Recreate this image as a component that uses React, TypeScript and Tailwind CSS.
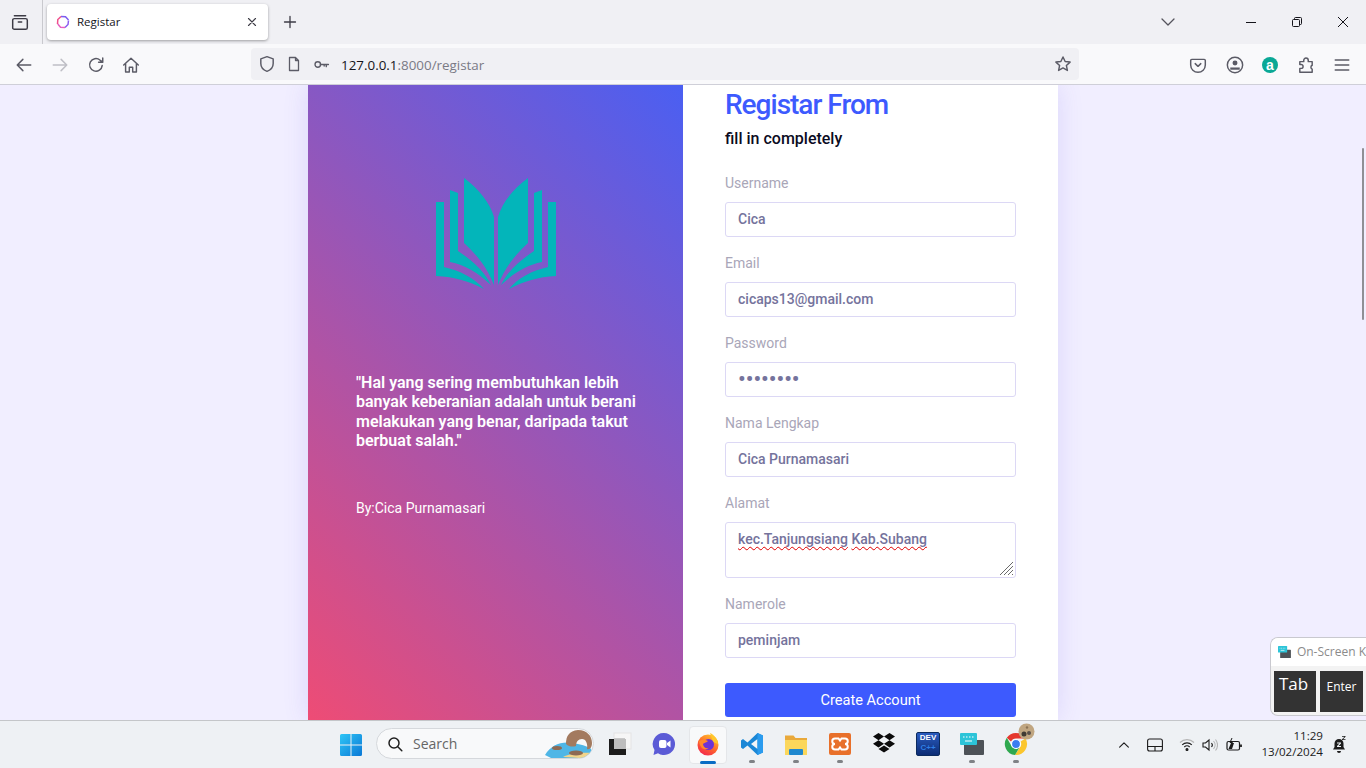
import type { ReactNode } from 'react';

const CHROME_FONT = 'font-["Open_Sans","Noto_Sans",sans-serif]';

const FIELDS_TOP = [
  { label: 'Username', value: 'Cica', type: 'text' },
  { label: 'Email', value: 'cicaps13@gmail.com', type: 'text' },
  { label: 'Password', value: 'password', type: 'password' },
  { label: 'Nama Lengkap', value: 'Cica Purnamasari', type: 'text' },
];

function Stroke({ size = 18, children }: { size?: number; children: ReactNode }) {
  return (
    <svg
      width={size}
      height={size}
      viewBox="0 0 16 16"
      fill="none"
      stroke="currentColor"
      strokeWidth="1.3"
      strokeLinecap="round"
      strokeLinejoin="round"
    >
      {children}
    </svg>
  );
}

function TabStrip() {
  return (
    <div className="flex h-[44px] shrink-0 items-center bg-[#f0f0f4] text-[#3c3b45]">
      <div className="flex h-full w-[43px] items-center justify-center border-r border-[#c9c9ce] pr-[2px]">
        <Stroke>
          <rect x="1.5" y="5" width="13" height="9.5" rx="1.5" />
          <path d="M3 2.5h10M6.5 8h3" />
        </Stroke>
      </div>
      <div className="ml-[4px] flex h-[36px] w-[221px] items-center rounded-[4px] bg-white pl-[9px] pr-[9px] shadow-[0_1px_3px_rgba(0,0,0,0.35)]">
        <svg width="14" height="14" viewBox="0 0 14 14" fill="none" strokeWidth="1.5">
          <path d="M5 1.500 9.500 1.800 12.500 5" stroke="#7c5cf0" />
          <path d="M12.500 5.500 12 9.500 9 12.500" stroke="#8a5cf0" />
          <path d="M9 12.500 4.500 12.300 1.800 9" stroke="#e65fc0" />
          <path d="M1.500 9 1.800 4.500 5 1.500" stroke="#f0508c" />
        </svg>
        <span className={`ml-[7px] flex-1 text-[11.5px] text-[#15141a] ${CHROME_FONT}`}>Registar</span>
        <Stroke size={14}>
          <path d="m4 4 8 8M12 4l-8 8" />
        </Stroke>
      </div>
      <div className="ml-[14px]">
        <Stroke size={16}>
          <path d="M8 2.5v11M2.5 8h11" />
        </Stroke>
      </div>
      <div className="ml-auto flex items-center text-[#55545c]">
        <Stroke size={16}>
          <path d="m2 5 6 6 6-6" />
        </Stroke>
      </div>
      <div className="flex items-center text-[#15141a]">
        <div className="ml-[70px] h-[1px] w-[10px] bg-[#15141a]" />
        <svg className="ml-[36px]" width="10" height="10" viewBox="0 0 10 10" fill="none" stroke="#15141a">
          <rect x="0.5" y="2.5" width="7" height="7" rx="1" />
          <path d="M2.5 2.5v-1a1 1 0 0 1 1-1h5a1 1 0 0 1 1 1v5a1 1 0 0 1-1 1h-1" />
        </svg>
        <svg className="ml-[36px] mr-[18px]" width="10" height="10" viewBox="0 0 10 10" fill="none" stroke="#15141a">
          <path d="m0 0 10 10M10 0 0 10" />
        </svg>
      </div>
    </div>
  );
}

function NavBar() {
  return (
    <div className="flex h-[41px] shrink-0 items-center border-b border-[#cfcfd8] bg-[#f9f9fb] text-[#5b5b66]">
      <div className="flex w-[251px] items-center pl-[15px] pt-[1px]">
        <Stroke>
          <path d="M14 8H2.5M7 3 2 8l5 5" />
        </Stroke>
        <div className="ml-[18px] text-[#bfbfc6]">
          <Stroke>
            <path d="M2 8h11.5M9 3l5 5-5 5" />
          </Stroke>
        </div>
        <div className="ml-[18px]">
          <Stroke>
            <path d="M13.5 8.5A5.6 5.6 0 1 1 11.5 3.6L14 5.5M14 1.8v3.7h-3.7" />
          </Stroke>
        </div>
        <div className="ml-[17px]">
          <Stroke>
            <path d="M1.5 8 8 2l6.5 6M3.2 6.8v7.4h3.3V10h3v4.2h3.3V6.8" />
          </Stroke>
        </div>
      </div>
      <div className="flex h-[32px] w-[828px] items-center rounded-[4px] bg-[#f0f0f4] pl-[7px] pr-[7px]">
        <Stroke>
          <path d="M8 1.5 2.5 3.5v4c0 3.4 2.3 5.8 5.5 7 3.2-1.2 5.5-3.6 5.5-7v-4z" />
        </Stroke>
        <div className="ml-[10px]">
          <Stroke size={16}>
            <path d="M3.5 1.5h6l3 3v10h-9zM9.5 1.5v3h3" />
          </Stroke>
        </div>
        <div className="ml-[11px]">
          <Stroke size={17}>
            <circle cx="4.5" cy="8" r="2.6" />
            <path d="M7 8h7.5M12.5 8v2M10.5 8v1.5" />
          </Stroke>
        </div>
        <div className={`ml-[11px] flex-1 pt-[2px] text-[13.4px] ${CHROME_FONT}`}>
          <span className="text-[#15141a]">127.0.0.1</span>
          <span className="text-[#7a7a85]">:8000/registar</span>
        </div>
        <Stroke>
          <path d="m8 1.8 1.9 4 4.4.5-3.3 3 .9 4.4L8 11.5l-3.9 2.2.9-4.4-3.3-3 4.4-.5z" />
        </Stroke>
      </div>
      <div className="flex flex-1 items-center pl-[110px] pt-[1px]">
        <Stroke>
          <path d="M2.5 3h11a1 1 0 0 1 1 1v4a6.500 6.500 0 0 1-13 0V4a1 1 0 0 1 1-1z" />
          <path d="m5.500 6.800 2.500 2.400 2.500-2.400" />
        </Stroke>
        <div className="ml-[19px]">
          <svg width="18" height="18" viewBox="0 0 16 16" fill="none" stroke="currentColor" strokeWidth="1.3">
            <circle cx="8" cy="8" r="6.800" />
            <circle cx="8" cy="6.200" r="2.200" fill="currentColor" stroke="none" />
            <path d="M3.800 11.200h8.400" strokeWidth="2" />
          </svg>
        </div>
        <div className="ml-[18px] flex h-[16px] w-[16px] items-center justify-center rounded-full bg-[#0aa896] font-['Liberation_Sans',sans-serif] text-[14px] font-bold leading-none text-white">
          a
        </div>
        <div className="ml-[19px]">
          <Stroke>
            <path d="M6 3.800a2 2 0 0 1 4 0V5h3.500v3.200a2 2 0 0 0 0 3.600v2.700H2.500V11h1.200a1.700 1.700 0 0 0 0-3.400H2.500V5H6z" />
          </Stroke>
        </div>
        <div className="ml-[18px]">
          <Stroke>
            <path d="M2 3.500h12M2 8h12M2 12.500h12" />
          </Stroke>
        </div>
      </div>
    </div>
  );
}

function BookLogo() {
  return (
    <svg width="150" height="135" viewBox="0 0 150 135" fill="#03b5ba">
      <path d="M43 13C58 24 69 38 73 52L73 120C66 102 55 89 43 78Z" />
      <path d="M107 13C92 24 81 38 77 52L77 120C84 102 95 89 107 78Z" />
      <path d="M29 25 37 28V86C52 96 64 107 70 120 56 107 44 100 29 97Z" />
      <path d="M121 25 113 28V86C98 96 86 107 80 120 94 107 106 100 121 97Z" />
      <path d="M15 37H23V102C40 106 53 113 63 124 48 116 34 112 15 111Z" />
      <path d="M135 37H127V102C110 106 97 113 88 124 103 116 117 112 135 111Z" />
    </svg>
  );
}

function QuotePanel() {
  return (
    <div className="flex w-[375px] flex-col bg-[linear-gradient(45deg,#ee4c75,#4a5ff2)] pl-[48px] pr-[40px] text-white">
      <div className="ml-[-8px] mt-[80px] flex justify-center">
        <BookLogo />
      </div>
      <p className="mt-[73px] text-[16px] font-semibold leading-[19.4px]">
        "Hal yang sering membutuhkan lebih banyak keberanian adalah untuk berani melakukan yang benar, daripada takut
        berbuat salah."
      </p>
      <p className="mt-[47px] text-[14px] leading-[20px]">By:Cica Purnamasari</p>
    </div>
  );
}

function Field({ label, value, type }: { label: string; value: string; type: string }) {
  return (
    <div className="mb-[16px]">
      <label className="mb-[8px] block text-[14px] leading-[21px] text-[#a9a6b8]">{label}</label>
      <input
        readOnly
        type={type}
        value={value}
        className={`block h-[35px] w-full rounded-[3px] border border-[#dcd8f5] bg-white px-[12px] pb-[1px] font-medium text-[#75739c] outline-none ${
          type === 'password' ? 'text-[22px]' : 'text-[14px]'
        }`}
      />
    </div>
  );
}

function FormPanel() {
  return (
    <div className="w-[375px] bg-white pl-[42px] pr-[42px] pt-[2px]">
      <h1 className="text-[28px] font-medium leading-[36px] tracking-[-1px] text-[#3d5afe]">Registar From</h1>
      <p className="mt-[4px] text-[16px] font-medium leading-[24px] text-[#0b0b22]">fill in completely</p>
      <div className="mt-[22px]">
        {FIELDS_TOP.map((field) => (
          <Field key={field.label} {...field} />
        ))}
        <div className="mb-[16px]">
          <label className="mb-[8px] block text-[14px] leading-[21px] text-[#a9a6b8]">Alamat</label>
          <div className="relative h-[56px] rounded-[3px] border border-[#dcd8f5] px-[12px] pt-[6px] text-[14px] font-medium leading-[21px] text-[#75739c]">
            <span className="underline decoration-[#e00000] decoration-wavy decoration-1 underline-offset-2 [text-decoration-skip-ink:none]">kec.Tanjungsiang</span>{' '}
            <span className="underline decoration-[#e00000] decoration-wavy decoration-1 underline-offset-2 [text-decoration-skip-ink:none]">Kab.Subang</span>
            <svg className="absolute bottom-[1px] right-[1px]" width="15" height="15" viewBox="0 0 15 15" stroke="#6b6b6b" strokeWidth="1">
              <path d="M1 14 14 1M5 14 14 5M9 14l5-5M13 14l1-1" />
            </svg>
          </div>
        </div>
        <Field label="Namerole" value="peminjam" type="text" />
        <button
          type="button"
          className="mt-[9px] h-[34px] w-full rounded-[3px] bg-[#3d5afe] pt-[1px] text-[14.6px] text-white"
        >
          Create Account
        </button>
      </div>
    </div>
  );
}

function WindowsLogo() {
  return (
    <svg width="24" height="24" viewBox="0 0 24 24">
      <defs>
        <linearGradient id="win" x1="0" y1="0" x2="1" y2="1">
          <stop offset="0" stopColor="#2fc6f6" />
          <stop offset="1" stopColor="#0a78d6" />
        </linearGradient>
      </defs>
      <path fill="url(#win)" d="M1 2.500A1.500 1.500 0 0 1 2.500 1h9v10.500H1zM12.500 1h9A1.500 1.500 0 0 1 23 2.500v9H12.500zM1 12.500h10.500V23h-9A1.500 1.500 0 0 1 1 21.500zM12.500 12.500H23v9a1.500 1.500 0 0 1-1.500 1.500h-9z" />
    </svg>
  );
}

function SearchPill() {
  return (
    <div className="ml-[13px] mb-[2px] flex h-[31px] w-[218px] items-center overflow-hidden rounded-full border border-[#d5d8dc] bg-[#f8f9fa] pl-[10px]">
      <svg width="16" height="16" viewBox="0 0 16 16" fill="none" stroke="#202020" strokeWidth="1.500">
        <circle cx="7" cy="7" r="5" />
        <path d="m10.800 10.800 4 4" strokeLinecap="round" />
      </svg>
      <span className={`ml-[10px] flex-1 text-[14px] text-[#666] ${CHROME_FONT}`}>Search</span>
      <svg width="50" height="29" viewBox="0 0 50 29">
        <path d="M2 26C8 16 18 12 30 14c10 2 18 4 19 8-2 5-6 7-12 7H8z" fill="#4fb6e6" />
        <path d="M20 28c6-4 20-5 29-4-2 4-7 5-12 5z" fill="#f2d48a" />
        <path d="M23 15c0-8 3-13 12-14 9 0 14 6 14 13 0 4-2 7-5 6 1-5-1-10-5-10-4 0-6 3-6 7-3 1-7 1-10-2z" fill="#a37a5f" />
        <ellipse cx="14" cy="19" rx="5" ry="2" fill="#8d6a54" />
        <ellipse cx="33" cy="24" rx="7" ry="2.500" fill="#8d6a54" />
      </svg>
    </div>
  );
}

function FirefoxIcon() {
  return (
    <svg width="24" height="24" viewBox="0 0 24 24">
      <defs>
        <linearGradient id="fx" x1="0.8" y1="0" x2="0.2" y2="1">
          <stop offset="0" stopColor="#ffcb2d" />
          <stop offset="0.5" stopColor="#ff6a2b" />
          <stop offset="1" stopColor="#f2224f" />
        </linearGradient>
      </defs>
      <circle cx="12" cy="13" r="10.500" fill="url(#fx)" />
      <path d="M14 1c4 2 8 6 8 11l-5-2z" fill="#ffc62b" />
      <circle cx="12.500" cy="12.500" r="5.500" fill="#6b33d6" />
      <path d="M3 9c3-2 6-2 9 0-2 2-5 2-5 3 0 3 3 5 6 4-4 3-9 1-10-7z" fill="#ff8a2b" />
    </svg>
  );
}

function TaskIcons() {
  return (
    <>
      <TaskSlot>
        <svg width="24" height="24" viewBox="0 0 24 24">
          <rect x="6" y="1" width="17" height="16" fill="#f6f6f6" stroke="#e4e4e4" />
          <rect x="6" y="6" width="11" height="11" fill="#c9c9c9" />
          <rect x="1" y="7" width="17" height="16" fill="#1c1c1c" />
          <rect x="6" y="7" width="12" height="10" fill="#bdbdbd" />
        </svg>
      </TaskSlot>
      <TaskSlot>
        <svg width="24" height="24" viewBox="0 0 24 24">
          <path d="M12 1a11 11 0 1 1-6 20.200L1.500 23l1-5A11 11 0 0 1 12 1z" fill="#5b5bd6" />
          <rect x="7" y="8" width="7.500" height="8" rx="2" fill="#fff" />
          <path d="m15 11 3.500-2.500v7L15 13z" fill="#fff" />
        </svg>
      </TaskSlot>
      <TaskSlot active>
        <FirefoxIcon />
      </TaskSlot>
      <TaskSlot running>
        <svg width="24" height="24" viewBox="0 0 24 24">
          <path d="M17.500 1 23 3.500v17L17.500 23 7.500 13.500 3 17l-2-1.500v-7L3 7l4.500 3.500z" fill="#1b87d6" />
          <path d="M17.500 7 11 12l6.500 5z" fill="#f3f5f7" />
          <path d="M17.500 1 23 3.500v17L17.500 23z" fill="#2a9bee" />
        </svg>
      </TaskSlot>
      <TaskSlot running>
        <svg width="24" height="24" viewBox="0 0 24 24">
          <path d="M1 3.500h8.500l2 2.500H23v16H1z" fill="#e9a93a" />
          <rect x="1" y="8" width="22" height="15" fill="#fbd75b" />
          <rect x="5" y="17" width="14" height="6" rx="1" fill="#1f88cf" />
        </svg>
      </TaskSlot>
      <TaskSlot running>
        <svg width="24" height="24" viewBox="0 0 24 24" fill="none">
          <rect x="1" y="1" width="22" height="22" rx="2" fill="#e8702a" />
          <path d="M7 6.500h3.500l1.500 2 1.500-2H17a2.500 2.500 0 0 1 0 5.500 2.500 2.500 0 0 1 0 5.500h-3.500l-1.500-2-1.500 2H7a2.500 2.500 0 0 1 0-5.500 2.500 2.500 0 0 1 0-5.500z" stroke="#fff" strokeWidth="2" />
        </svg>
      </TaskSlot>
      <TaskSlot>
        <svg width="24" height="24" viewBox="0 0 24 24" fill="#0b0b0b">
          <path d="M6.500 1 12 4.600 6.500 8.200 1 4.600zM17.500 1 23 4.600l-5.500 3.600L12 4.600zM1 11.800l5.500-3.600 5.500 3.600-5.500 3.600zM17.500 8.200l5.500 3.600-5.500 3.600-5.500-3.600zM6.500 17 12 13.500l5.500 3.500-5.500 3.600z" />
        </svg>
      </TaskSlot>
      <TaskSlot>
        <div className="flex h-[24px] w-[24px] flex-col items-center rounded-[2px] border border-[#0b2a5e] bg-[linear-gradient(#2a5cc0,#0c2c74)] font-['Liberation_Sans',sans-serif] text-[8px] font-bold leading-[10px]">
          <span className="text-white">DEV</span>
          <span className="text-[#2f7fe6]">C++</span>
        </div>
      </TaskSlot>
      <TaskSlot running>
        <KeyboardGlyph size={24} />
      </TaskSlot>
      <TaskSlot running>
        <div className="relative">
          <svg width="24" height="24" viewBox="0 0 24 24">
            <path d="M12 1a11 11 0 0 1 9.500 5.500H12a5.500 5.500 0 0 0-5 3L2.800 5.800A11 11 0 0 1 12 1z" fill="#e5382d" />
            <path d="M21.500 6.500A11 11 0 0 1 11 23l4.800-7.500a5.500 5.500 0 0 0 .8-6z" fill="#fbc62d" />
            <path d="M11 23A11 11 0 0 1 2.800 5.800L7.500 14a5.500 5.500 0 0 0 8 1.500z" fill="#2fa84f" />
            <circle cx="12" cy="12" r="4.500" fill="#3b7df0" stroke="#fff" strokeWidth="1.200" />
          </svg>
          <svg className="absolute right-[-7px] top-[-9px]" width="17" height="17" viewBox="0 0 17 17">
            <circle cx="8.500" cy="8.500" r="8" fill="#c0a681" />
            <circle cx="6" cy="11" r="2.500" fill="#3f3a34" />
            <circle cx="11" cy="10" r="2" fill="#57504a" />
            <circle cx="9" cy="4.500" r="1.200" fill="#8a7254" />
          </svg>
        </div>
      </TaskSlot>
    </>
  );
}

function TaskSlot({ children, active, running }: { children: ReactNode; active?: boolean; running?: boolean }) {
  return (
    <div className="relative flex h-[44px] w-[44px] items-center justify-center">
      {active && <span className="absolute inset-x-[3px] inset-y-[3px] rounded-[4px] border border-[#e4e6e9] bg-[#f8f9fa]" />}
      <span className="relative mb-[2px]">{children}</span>
      {running && <span className="absolute bottom-[4px] left-[19px] h-[3px] w-[6px] rounded-full bg-[#7f8286]" />}
      {active && <span className="absolute bottom-[3px] left-[14px] h-[3px] w-[16px] rounded-full bg-[#0a6cc4]" />}
    </div>
  );
}

function KeyboardGlyph({ size }: { size: number }) {
  return (
    <svg width={size} height={size} viewBox="0 0 24 24">
      <rect x="4" y="8" width="20" height="15" rx="1" fill="#4d5257" />
      <rect x="0" y="1" width="17" height="12" rx="1" fill="#2cc4d8" />
      <path d="M3 5h1.500M6 5h1.500M9 5h1.500M12 5h1.500M5 9h7" stroke="#fff" strokeWidth="1.200" />
    </svg>
  );
}

function Tray() {
  return (
    <div className={`ml-auto flex items-center text-[#1c1c1c] ${CHROME_FONT}`}>
      <Stroke size={14}>
        <path d="m3 10.500 5-5 5 5" />
      </Stroke>
      <div className="ml-[16px]">
        <svg width="16" height="14" viewBox="0 0 16 14" fill="none" stroke="#1c1c1c" strokeWidth="1.100">
          <rect x="0.600" y="1" width="14.800" height="12" rx="2" />
          <path d="M0.600 8.500h14.800M8 8.500V13" />
        </svg>
      </div>
      <div className="ml-[16px]">
        <svg width="16" height="14" viewBox="0 0 16 14" fill="none" stroke="#1c1c1c" strokeWidth="1.100">
          <path d="M1 4.500a10 10 0 0 1 14 0" stroke="#b5b5b5" />
          <path d="M3.200 6.800a7 7 0 0 1 9.600 0" />
          <path d="M5.300 9a4 4 0 0 1 5.400 0" />
          <circle cx="8" cy="11.500" r="1" fill="#1c1c1c" />
        </svg>
      </div>
      <div className="ml-[7px]">
        <svg width="16" height="14" viewBox="0 0 16 14" fill="none" stroke="#1c1c1c" strokeWidth="1.100">
          <path d="M1 5v4h2.500L7 12V2L3.500 5z" />
          <path d="M9.500 5a3 3 0 0 1 0 4" />
          <path d="M11.500 3a6 6 0 0 1 0 8M13.500 1.500a8.500 8.500 0 0 1 0 11" stroke="#b5b5b5" />
        </svg>
      </div>
      <div className="ml-[8px]">
        <svg width="17" height="14" viewBox="0 0 17 14" fill="none" stroke="#1c1c1c" strokeWidth="1.200">
          <rect x="1" y="3.500" width="12.500" height="8.500" rx="1.500" />
          <path d="M15 6.500v2.500" strokeWidth="1.800" />
          <path d="M2.500 11 5 5h3l-2 6z" fill="#1c1c1c" stroke="none" />
          <path d="M6 0 4 4.500h2.500L5 8" strokeWidth="1" />
        </svg>
      </div>
      <div className="ml-[12px] mb-[1px] flex w-[68px] flex-col items-end text-[11.6px] leading-[16px]">
        <span>11:29</span>
        <span>13/02/2024</span>
      </div>
      <div className="ml-[9px] mr-[20px]">
        <svg width="14" height="18" viewBox="0 0 14 18" fill="#1c1c1c">
          <path d="M7 3a4.500 4.500 0 0 1 4.500 4.500V11l1.500 2.500H1L2.500 11V7.500A4.500 4.500 0 0 1 7 3z" />
          <path d="M5 15h4a2 2 0 0 1-4 0z" />
          <path d="M10 0h3.500v.8L11 3.200h2.500V4H10v-.8l2.500-2.400H10z" />
          <path d="M5 6.500h4v1L6.500 10H9v1H5v-1l2.500-2.500H5z" fill="#f0f3f6" />
        </svg>
      </div>
    </div>
  );
}

function Taskbar() {
  return (
    <div className="flex h-[48px] shrink-0 items-center border-t border-[#c4c6c9] bg-[#eef1f4] pl-[339px]">
      <WindowsLogo />
      <SearchPill />
      <div className="ml-[4px] flex items-center">
        <TaskIcons />
      </div>
      <Tray />
    </div>
  );
}

function OnScreenKeyboard() {
  return (
    <div className={`absolute left-[1270px] top-[637px] h-[79px] w-[96px] overflow-hidden rounded-l-[8px] border border-r-0 border-[#c9c9cf] bg-[#f3f3f3] ${CHROME_FONT}`}>
      <div className="flex h-[28px] items-center whitespace-nowrap bg-white pl-[7px]">
        <KeyboardGlyph size={18} />
        <span className="ml-[6px] text-[12px] text-[#8b8b8b]">On-Screen K</span>
      </div>
      <div className="flex gap-[4px] pl-[3px] pt-[5px] text-white">
        <div className="h-[41px] w-[42px] bg-[#333333] pl-[5px] text-[17px] leading-[26px]">Tab</div>
        <div className="h-[41px] w-[43px] bg-[#333333] pt-[6px] text-center text-[12px] leading-[20px]">Enter</div>
      </div>
    </div>
  );
}

export default function App() {
  return (
    <div className="relative flex h-[768px] w-[1366px] flex-col overflow-hidden bg-[#f1eeff] font-['Roboto',sans-serif]">
      <TabStrip />
      <NavBar />
      <div className="relative flex min-h-0 flex-1 justify-center overflow-hidden bg-[#f1eeff]">
        <div className="flex shadow-[0_0_24px_rgba(90,70,230,0.14)]">
          <QuotePanel />
          <FormPanel />
        </div>
        <div className="absolute right-[2px] top-[63px] h-[172px] w-[2px] rounded-full bg-[#8f8f95]" />
      </div>
      <Taskbar />
      <OnScreenKeyboard />
    </div>
  );
}
